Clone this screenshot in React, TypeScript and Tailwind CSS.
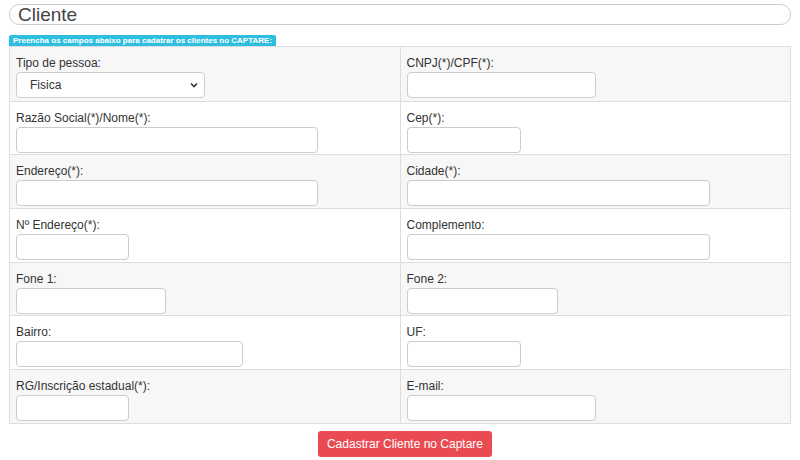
import React from "react";

type Field = { label: string; w: string; select?: boolean };

const rows: [Field, Field][] = [
  [{ label: "Tipo de pessoa:", w: "w-[189px]", select: true }, { label: "CNPJ(*)/CPF(*):", w: "w-[189px]" }],
  [{ label: "Razão Social(*)/Nome(*):", w: "w-[302px]" }, { label: "Cep(*):", w: "w-[114px]" }],
  [{ label: "Endereço(*):", w: "w-[302px]" }, { label: "Cidade(*):", w: "w-[303px]" }],
  [{ label: "Nº Endereço(*):", w: "w-[113px]" }, { label: "Complemento:", w: "w-[303px]" }],
  [{ label: "Fone 1:", w: "w-[150px]" }, { label: "Fone 2:", w: "w-[151px]" }],
  [{ label: "Bairro:", w: "w-[227px]" }, { label: "UF:", w: "w-[114px]" }],
  [{ label: "RG/Inscrição estadual(*):", w: "w-[113px]" }, { label: "E-mail:", w: "w-[189px]" }],
];

const Cell = ({ f, last }: { f: Field; last?: boolean }) => (
  <div className={`flex-1 px-[6px] pt-[9px] h-full ${last ? "" : "border-r border-[#ddd]"}`}>
    <div className="text-[12px] leading-[14px] text-[#333] mb-[2px]">{f.label}</div>
    {f.select ? (
      <div className={`${f.w} h-[26px] bg-white border border-[#ccc] rounded-[4px] flex items-center justify-between pl-[13px] pr-[5px] text-[12px] text-[#333]`}>
        <span>Fisica</span>
        <svg width="10" height="10" viewBox="0 0 10 10"><path d="M2 3.5 5 6.5 8 3.5" fill="none" stroke="#333" strokeWidth="1.6" /></svg>
      </div>
    ) : (
      <input className={`${f.w} h-[26px] bg-white border border-[#ccc] rounded-[4px] outline-none block`} />
    )}
  </div>
);

export default function App() {
  return (
    <div className="w-[800px] h-[460px] bg-white pt-[4px] px-[9px]" style={{ fontFamily: "Arial, 'Liberation Sans', sans-serif" }}>
      <div className="h-[21px] border border-[#ccc] rounded-[10px] pl-[8px] text-[19px] leading-[19px] text-[#444]">Cliente</div>
      <div className="mt-[10px] w-fit h-[11px] bg-[#2ebfe0] text-white text-[8px] font-bold leading-[11px] px-[4px] rounded-t-[2px]">
        Preencha os campos abaixo para cadatrar os clientes no CAPTARE:
      </div>
      <div className="border border-[#ddd]">
        {rows.map((r, i) => (
          <div key={i} className={`flex h-[53.7px] ${i % 2 === 0 ? "bg-[#f7f7f7]" : "bg-white"} ${i ? "border-t border-[#ddd]" : ""}`}>
            <Cell f={r[0]} />
            <Cell f={r[1]} last />
          </div>
        ))}
      </div>
      <div className="flex justify-center mt-[7px]">
        <button className="h-[26px] px-[9px] bg-[#ea4b53] text-white text-[12px] rounded-[3px] ml-[10px]">
          Cadastrar Cliente no Captare
        </button>
      </div>
    </div>
  );
}
